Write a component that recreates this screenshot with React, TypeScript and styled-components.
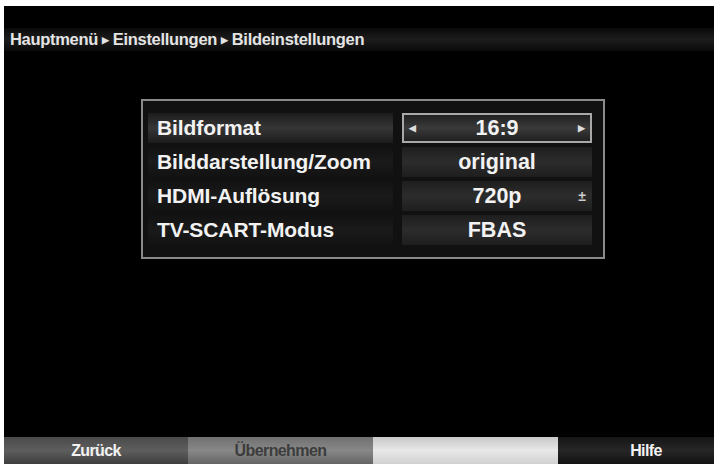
import React from 'react';
import styled, {createGlobalStyle} from 'styled-components';

const Global = createGlobalStyle`
  html, body {
    margin: 0;
    padding: 0;
    background: #fff;
  }
  body {
    font-family: "Liberation Sans", Arial, sans-serif;
  }
`

type RowType = {
    label: string
    value: string
    selected?: boolean
    scroll?: boolean
}

const rows: RowType[] = [
    {label: 'Bildformat', value: '16:9', selected: true},
    {label: 'Bilddarstellung/Zoom', value: 'original'},
    {label: 'HDMI-Auflösung', value: '720p', scroll: true},
    {label: 'TV-SCART-Modus', value: 'FBAS'},
]

const Frame = styled.div`
  width: 718px;
  height: 464px;
  padding: 6px 4px 0 4px;
  box-sizing: border-box;
  background: #fff;
`

const Screen = styled.div`
  height: 100%;
  background: #000;
  display: flex;
  flex-direction: column;
`

const Header = styled.div`
  margin-top: 22px;
  height: 23px;
  display: flex;
  align-items: center;
  padding-left: 6px;
  background: linear-gradient(#0a0a0a, #1c1c1c 50%, #0a0a0a);
  color: #e4e4e4;
  font-size: 16.5px;
  font-weight: bold;
  letter-spacing: -0.3px;
`

const Arrow = styled.span`
  font-size: 9px;
  margin: 0 4px;
`

const Body = styled.div`
  flex: 1;
  display: flex;
  align-items: flex-start;
  padding-top: 48px;
  padding-left: 137px;
`

const Dialog = styled.div`
  width: 464px;
  box-sizing: border-box;
  border: 2px solid #8a8a8a;
  background: #111;
  padding: 12px 11px 12px 5px;
  display: flex;
  flex-direction: column;
  gap: 4px;
`

const Row = styled.div`
  display: flex;
  gap: 9px;
  height: 30px;
`

const Label = styled.div<{selected?: boolean}>`
  flex: 1;
  display: flex;
  align-items: center;
  padding-left: 9px;
  color: #f2f2f2;
  font-size: 21px;
  font-weight: bold;
  letter-spacing: -0.1px;
  background: ${props => props.selected
      ? 'linear-gradient(#1c1c1c, #363636 50%, #1c1c1c)'
      : 'linear-gradient(#121212, #1a1a1a 50%, #121212)'};
`

const Value = styled.div<{selected?: boolean}>`
  width: 190px;
  box-sizing: border-box;
  display: flex;
  align-items: center;
  justify-content: center;
  position: relative;
  color: #f2f2f2;
  font-size: 21.5px;
  font-weight: bold;
  background: ${props => props.selected
      ? 'linear-gradient(#202020, #3a3a3a 50%, #202020)'
      : 'linear-gradient(#1e1e1e, #2c2c2c 50%, #1e1e1e)'};
  border: ${props => props.selected ? '2px solid #a8a8a8' : 'none'};
`

const Side = styled.span<{right?: boolean}>`
  position: absolute;
  top: 50%;
  transform: translateY(-50%);
  ${props => props.right ? 'right: 5px;' : 'left: 5px;'}
  font-size: 9px;
  color: #ddd;
`

const ScrollMark = styled.span`
  position: absolute;
  top: 50%;
  right: 6px;
  transform: translateY(-50%);
  font-size: 14px;
  color: #ccc;
`

const Footer = styled.div`
  height: 27px;
  display: flex;
  font-size: 16px;
  font-weight: bold;
  letter-spacing: -0.6px;
`

const Key = styled.div<{tone: 'red' | 'green' | 'yellow' | 'blue'}>`
  display: flex;
  align-items: center;
  justify-content: center;
  box-sizing: border-box;
  width: ${props => props.tone === 'red' ? '184px' : props.tone === 'blue' ? 'auto' : '185px'};
  flex: ${props => props.tone === 'blue' ? '1' : 'none'};
  padding-left: ${props => props.tone === 'blue' ? '20px' : '0'};
  color: ${props => props.tone === 'green' ? '#3c3c3c' : '#f2f2f2'};
  background: ${props =>
      props.tone === 'red' ? 'linear-gradient(#4a4a4a, #5e5e5e 50%, #3e3e3e)'
      : props.tone === 'green' ? 'linear-gradient(#707070, #888 50%, #646464)'
      : props.tone === 'yellow' ? 'linear-gradient(#c8c8c8, #e8e8e8 50%, #d0d0d0)'
      : 'linear-gradient(#161616, #262626 50%, #121212)'};
`

export default function App() {
    return (
        <Frame>
            <Global/>
            <Screen>
                <Header>
                    Hauptmenü<Arrow>▶</Arrow>Einstellungen<Arrow>▶</Arrow>Bildeinstellungen
                </Header>
                <Body>
                    <Dialog>
                        {rows.map(r => (
                            <Row key={r.label}>
                                <Label selected={r.selected}>{r.label}</Label>
                                <Value selected={r.selected}>
                                    {r.selected && <Side>◀</Side>}
                                    {r.value}
                                    {r.selected && <Side right>▶</Side>}
                                    {r.scroll && <ScrollMark>±</ScrollMark>}
                                </Value>
                            </Row>
                        ))}
                    </Dialog>
                </Body>
                <Footer>
                    <Key tone="red">Zurück</Key>
                    <Key tone="green">Übernehmen</Key>
                    <Key tone="yellow"/>
                    <Key tone="blue">Hilfe</Key>
                </Footer>
            </Screen>
        </Frame>
    );
}
